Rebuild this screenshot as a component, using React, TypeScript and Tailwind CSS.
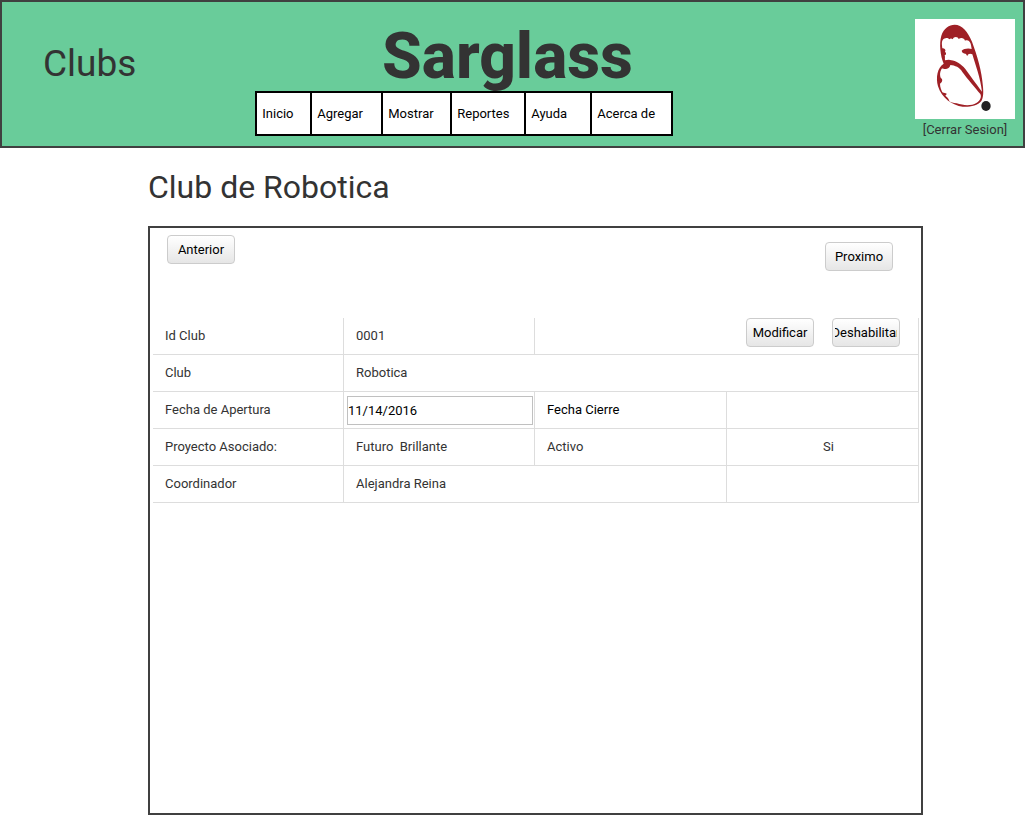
import { useState } from "react";

const menu = [
  { label: "Inicio", width: "w-[55px]" },
  { label: "Agregar", width: "w-[71px]" },
  { label: "Mostrar", width: "w-[69px]" },
  { label: "Reportes", width: "w-[74px]" },
  { label: "Ayuda", width: "w-[66px]" },
  { label: "Acerca de", width: "w-[81px]" },
];

function Logo() {
  return (
    <svg viewBox="0 0 300 300" className="size-[100px] bg-white" role="img" aria-label="Sarglass">
      <path
        fill="#9f2026"
        fillRule="evenodd"
        d="M86 134 C76 110 72 74 79 50 C87 27 102 17 119 17 C141 17 159 38 171 68 C187 112 200 152 204 204 C206 226 204 238 199 246 C188 261 164 264 143 263 C112 260 80 237 69 202 C62 174 67 147 86 134 Z
        M82 88 C81 78 79 69 83 63 C89 56 98 55 103 61 C107 57 111 59 113 61 C115 52 129 51 131 60 C138 55 148 57 150 65 C158 61 166 67 168 78 L170 90 C162 87 146 88 140 95 C141 102 147 103 151 104 C154 104 155 110 157 111 C159 104 165 103 172 106 C181 137 196 176 201 218 C183 194 163 167 151 150 C138 135 121 125 109 124 C102 120 96 123 90 124 C89 117 91 114 89 109 C96 106 93 101 90 98 C94 92 88 88 82 88 Z
        M80 149 C84 147 87 152 96 149 C104 147 105 142 106 138 C120 139 134 145 142 159 C158 181 181 207 196 225 C201 235 194 246 184 252 C170 261 145 260 125 253 C114 252 107 250 103 246 C100 236 96 234 91 230 C100 222 93 225 82 220 C79 212 75 205 75 194 C83 188 84 181 77 176 C73 163 77 155 80 149 Z"
      />
      <ellipse cx="213" cy="261" rx="14" ry="15" fill="#232022" />
    </svg>
  );
}

function Button({ children, className = "" }: { children: string; className?: string }) {
  return (
    <button
      type="button"
      className={`flex h-[29px] w-[68px] shrink-0 items-center rounded border border-[#cccccc] bg-linear-to-b from-white to-[#e6e6e6] px-0.5 text-[13px] leading-5 text-black ${className}`}
    >
      <span className="flex w-full justify-center overflow-hidden">
        <span className="shrink-0">{children}</span>
      </span>
    </button>
  );
}

const cell = "h-[37px] border-r border-b border-[#dddddd] px-3";
const label = "h-[37px] border-r border-b border-[#dddddd] px-3 text-left font-normal";

export default function App() {
  const [opened, setOpened] = useState("11/14/2016");

  return (
    <div className="bg-white font-['Roboto','Liberation_Sans',sans-serif] text-[13px] leading-5 text-[#333333]">
      <header className="flex h-[148px] border-2 border-[#404040] bg-[#69cc9a] pr-2">
        <h2 className="w-1/4 pt-[41px] pl-[41px] text-[37px] leading-[42px]">Clubs</h2>
        <div className="w-1/2 pt-[25px]">
          <h1 className="h-16 pr-0.5 text-center text-[64px] leading-[60px] font-extrabold">Sarglass</h1>
          <nav className="relative flex h-[45px] w-max border-y-2 border-r-2 border-black bg-white">
            {menu.map((item) => (
              <a
                key={item.label}
                href="#"
                className={`flex items-center border-l-2 border-black pl-[5px] text-black ${item.width}`}
              >
                {item.label}
              </a>
            ))}
          </nav>
        </div>
        <div className="flex w-1/4 flex-col items-end pt-[17px]">
          <div className="flex flex-col items-center">
            <Logo />
            <a href="#" className="leading-[22px]">[Cerrar Sesion]</a>
          </div>
        </div>
      </header>

      <main className="mr-[102px] ml-[148px]">
        <h2 className="pt-[19px] text-[32px] leading-10">Club de Robotica</h2>
        <section className="mt-[19px] min-h-[589px] border-2 border-[#404040] pt-[7px] pr-0.5 pl-[3px]">
          <div className="flex h-[83px] items-start justify-between pr-[26px] pl-3.5">
            <Button>Anterior</Button>
            <Button className="mt-[7px]">Proximo</Button>
          </div>
          <table className="w-full table-fixed border-separate border-spacing-0">
            <colgroup>
              <col className="w-[191px]" />
              <col className="w-[191px]" />
              <col />
              <col />
            </colgroup>
            <tbody>
              <tr>
                <th scope="row" className={label}>Id Club</th>
                <td className={cell}>0001</td>
                <td colSpan={2} className="h-[37px] border-r border-b border-[#dddddd] pr-[18px] align-top">
                  <div className="flex justify-end gap-[18px]">
                    <Button>Modificar</Button>
                    <Button>Deshabilitar</Button>
                  </div>
                </td>
              </tr>
              <tr>
                <th scope="row" className={label}>Club</th>
                <td colSpan={3} className={cell}>Robotica</td>
              </tr>
              <tr>
                <th scope="row" className={label}>
                  <label htmlFor="opened">Fecha de Apertura</label>
                </th>
                <td className="h-[37px] border-r border-b border-[#dddddd] pr-px pl-[3px]">
                  <input
                    id="opened"
                    type="text"
                    value={opened}
                    onChange={(e) => setOpened(e.target.value)}
                    className="block h-[29px] w-full border border-[#c0c0c0] bg-white text-black"
                  />
                </td>
                <th scope="row" className="h-[37px] border-r border-b border-[#dddddd] px-3 text-left font-normal text-black">
                  Fecha Cierre
                </th>
                <td className={cell}></td>
              </tr>
              <tr>
                <th scope="row" className={label}>Proyecto Asociado:</th>
                <td className={cell}>
                  <span className="whitespace-pre">{"Futuro  Brillante"}</span>
                </td>
                <th scope="row" className={label}>Activo</th>
                <td className="h-[37px] border-r border-b border-[#dddddd] pl-3 text-center">Si</td>
              </tr>
              <tr>
                <th scope="row" className={label}>Coordinador</th>
                <td colSpan={2} className={cell}>Alejandra Reina</td>
                <td className={cell}></td>
              </tr>
            </tbody>
          </table>
        </section>
      </main>
    </div>
  );
}
